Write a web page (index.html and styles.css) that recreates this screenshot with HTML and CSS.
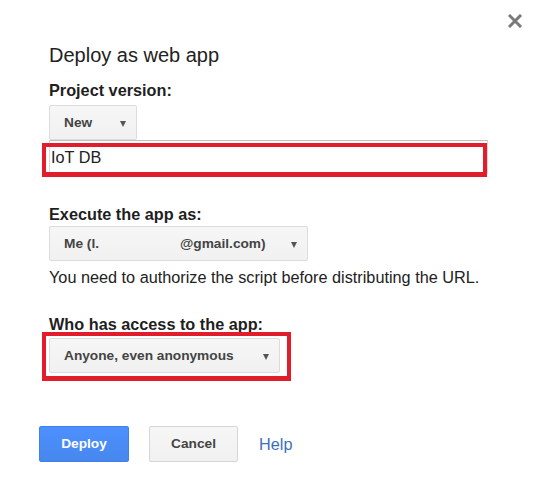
FILE: index.html
```html
<!DOCTYPE html>
<html>
<head>
<meta charset="utf-8">
<link rel="stylesheet" href="styles.css">
</head>
<body>
<div class="dialog">
  <div class="close" aria-label="Close">
    <svg width="14" height="14" viewBox="0 0 14 14"><path d="M2 2 L12 12 M12 2 L2 12" stroke="#7a7a7a" stroke-width="3" stroke-linecap="square"/></svg>
  </div>
  <div class="content">
    <div class="title">Deploy as web app</div>

    <div class="label label-version">Project version:</div>
    <div class="select sel-new"><span class="sel-text">New</span><span class="arrow"></span></div>
    <div class="field">
      <div class="input">IoT DB</div>
      <div class="mark mark-input"></div>
    </div>

    <div class="label label-exec">Execute the app as:</div>
    <div class="select sel-me"><span class="sel-text">Me (l.</span><span class="redact"></span><span class="sel-text">@gmail.com)</span><span class="arrow"></span></div>
    <div class="desc">You need to authorize the script before distributing the URL.</div>

    <div class="label label-access">Who has access to the app:</div>
    <div class="field field-access">
      <div class="select sel-anyone"><span class="sel-text">Anyone, even anonymous</span><span class="arrow"></span></div>
      <div class="mark mark-access"></div>
    </div>
  </div>

  <div class="buttons">
    <div class="btn btn-primary">Deploy</div>
    <div class="btn btn-secondary">Cancel</div>
    <div class="help">Help</div>
  </div>
</div>
</body>
</html>
```

FILE: styles.css
```css
html, body {
  margin: 0;
  padding: 0;
  background: #ffffff;
}

body {
  font-family: "Liberation Sans", Arial, sans-serif;
  color: #222222;
  width: 536px;
  height: 488px;
  overflow: hidden;
}

.dialog {
  position: relative;
  padding: 43px 0 0 39px;
}

.close {
  position: absolute;
  left: 508px;
  top: 14px;
  width: 14px;
  height: 14px;
}

.close svg {
  display: block;
}

.content {
  padding-left: 10px;
}

.title {
  font-size: 20px;
  line-height: 24px;
  color: #222222;
}

.label {
  font-size: 16.25px;
  line-height: 20px;
  font-weight: bold;
  color: #1f1f1f;
}

.label-version {
  margin-top: 13px;
}

.label-exec {
  margin-top: 30px;
}

.label-access {
  margin-top: 27px;
}

.select {
  display: flex;
  align-items: center;
  box-sizing: border-box;
  height: 35px;
  padding: 0 10px 0 14px;
  background: linear-gradient(#f6f6f6, #f1f1f1);
  border: 1px solid #dcdcdc;
  border-radius: 2px;
  font-size: 13.7px;
  font-weight: bold;
  color: #444444;
}

.sel-new {
  width: 88px;
  margin-top: 5px;
}

.sel-me {
  width: 259px;
  margin-top: 2px;
}

.sel-anyone {
  width: 231px;
}

.redact {
  display: inline-block;
  width: 81px;
}

.arrow {
  margin-left: auto;
  margin-top: 2px;
  width: 0;
  height: 0;
  border-left: 3.5px solid transparent;
  border-right: 3.5px solid transparent;
  border-top: 6px solid #555555;
}

.field {
  position: relative;
}

.field-access {
  margin-top: 4px;
}

.input {
  box-sizing: border-box;
  width: 439px;
  height: 34px;
  padding: 0 0 0 1px;
  border: 1px solid #d9d9d9;
  border-top-color: #c0c0c0;
  font-size: 16.25px;
  line-height: 32px;
  color: #222222;
}

.mark {
  position: absolute;
  box-sizing: border-box;
  border: 4px solid #e21d2b;
  border-bottom-width: 5px;
}

.mark-input {
  left: -7px;
  top: 3px;
  width: 445px;
  height: 34px;
}

.mark-access {
  left: -7px;
  top: -6px;
  width: 249px;
  height: 49px;
}

.desc {
  margin-top: 6px;
  font-size: 16.25px;
  line-height: 20px;
  color: #222222;
}

.buttons {
  display: flex;
  align-items: center;
  gap: 20px;
  margin-top: 53px;
}

.btn {
  box-sizing: border-box;
  height: 36px;
  line-height: 34px;
  padding: 0 21px;
  border-radius: 2px;
  font-size: 13.7px;
  font-weight: bold;
  text-align: center;
}

.btn-primary {
  width: 90px;
  background: linear-gradient(#4d90fe, #4787ed);
  border: 1px solid #3f80ec;
  color: #ffffff;
}

.btn-secondary {
  width: 89px;
  background: linear-gradient(#f6f6f6, #f1f1f1);
  border: 1px solid #d6d6d6;
  color: #444444;
}

.help {
  font-size: 16.25px;
  color: #3d6fc0;
  margin-left: 1px;
}
```
